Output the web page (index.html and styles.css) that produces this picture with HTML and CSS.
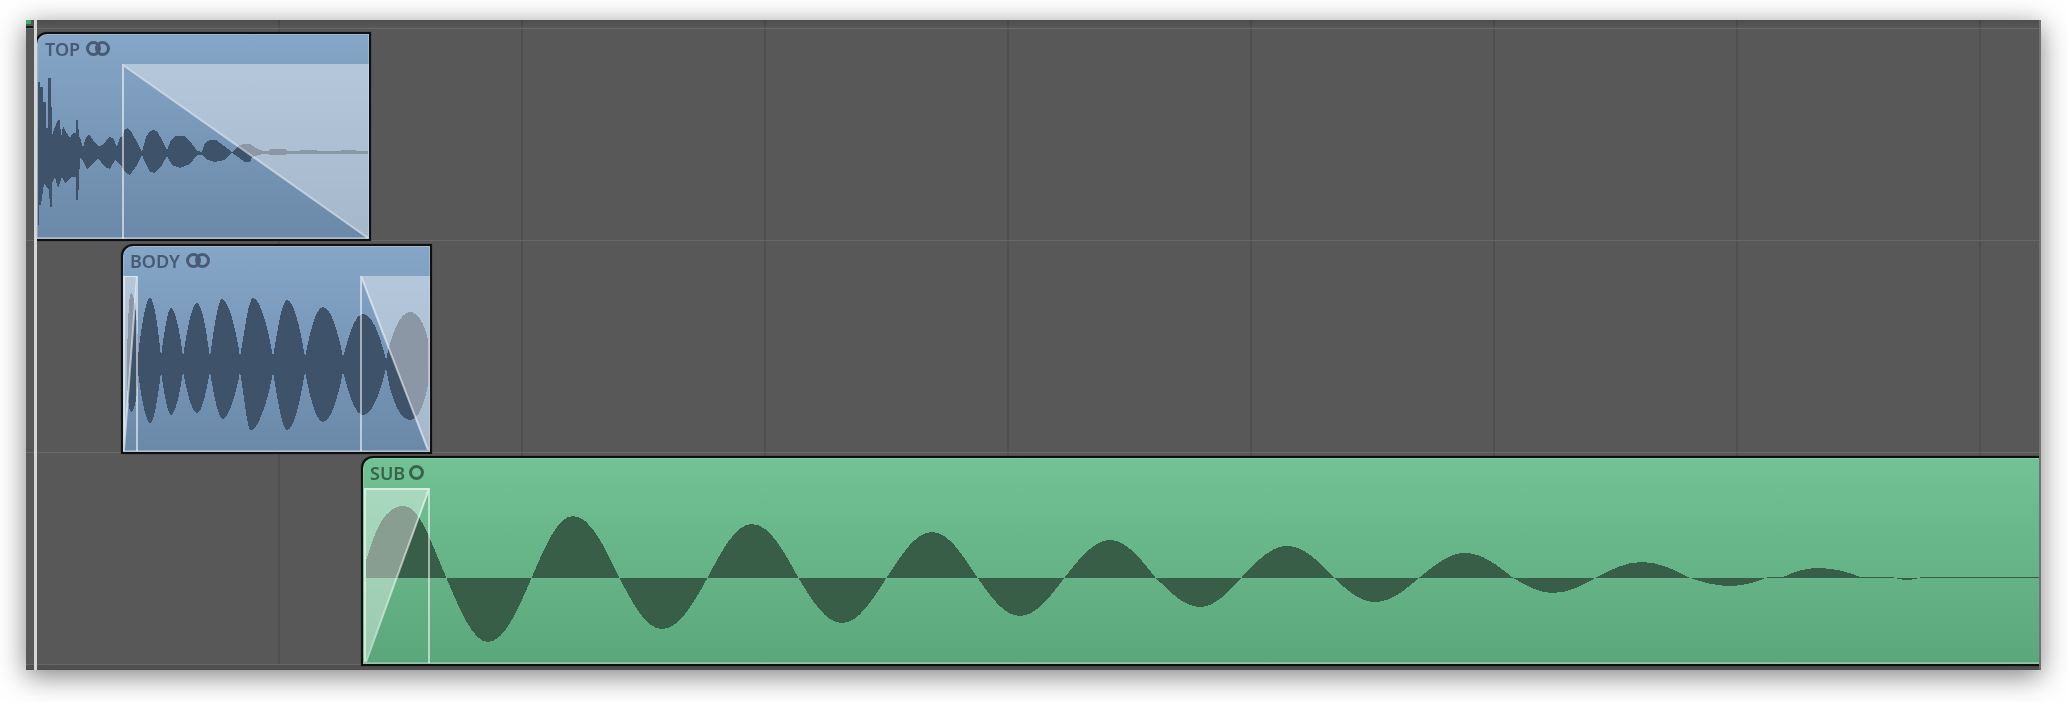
FILE: index.html
```html
<!DOCTYPE html>
<html lang="en">
<head>
<meta charset="utf-8">
<title>Arrangement</title>
<link rel="stylesheet" href="styles.css">
</head>
<body>
<main class="window">
  <div class="ruler"><span class="flag"></span><span class="tick"></span></div>
  <div class="playhead"></div>

  <section class="track">
    <article class="clip clip-blue clip-top">
      <header class="label">TOP
        <svg class="rings" viewBox="0 0 24 15"><circle cx="7.5" cy="7.5" r="6"/><circle cx="16.5" cy="7.5" r="6"/></svg>
      </header>
      <svg class="audio" viewBox="37 64 332 175" preserveAspectRatio="none">
        <path class="wave" d="M38 152 38 82 40 82 40 87 43 87 43 102 46 102 46 128 48 128 48 78 51 78 52 135 55 127 58 120 60 120 61 138 63 126 66 132 70 138 73 133 76 133 76 120 78 120 79 137 80 137 83 148 86 137 89 134 93 140 98 146 103 145 109 137 113 138 117 147 120 137 122 137 125 129 128 128 132 133 137 142 142 152 146 137 150 131 153 130 157 131 162 140 167 150 171 140 176 136 184 136 190 141 197 151 202 152 205 143 210 140 216 140 224 146 232 152 238 146 243 144 250 144 256 148 263 151 268 151 270 149 285 149 287 151 300 151 300 150 316 150 317 151 340 151 341 150 355 150 356 151 368 151 368 154 355 154 320 154 287 154 285 155 270 155 268 154 263 154 252 157 250 162 245 162 238 157 232 153 224 160 215 162 208 160 202 155 197 155 190 164 180 168 172 165 167 156 162 165 155 173 150 172 145 162 142 155 137 165 130 175 125 172 121 165 115 160 110 169 105 167 98 158 93 163 87 169 82 159 80 158 79 180 78 200 76 200 76 177 72 177 65 183 62 177 58 188 55 177 52 183 52 207 50 207 49 190 44 183 41 205 39 205 39 225 38 225Z"/>
        <path class="fade" d="M123 64H369V238Z"/>
        <path class="edge" d="M123 239V65L368 238"/>
      </svg>
    </article>
  </section>

  <section class="track">
    <article class="clip clip-blue clip-body">
      <header class="label">BODY
        <svg class="rings" viewBox="0 0 24 15"><circle cx="7.5" cy="7.5" r="6"/><circle cx="16.5" cy="7.5" r="6"/></svg>
      </header>
      <svg class="audio" viewBox="123 276 307 176" preserveAspectRatio="none">
        <path class="wave" d="M127 357C128 320 129 293 131 293C134 293 137 315 138 345V357C141 327 146 298 150 298C154 298 158 327 161 357C164 332 168 308 171 308C175 308 180 332 183 357C187 330 192 303 197 303C202 303 206 330 210 357C214 328 218 299 222 299C228 299 236 328 240 357C245 327 249 298 253 298C260 298 268 327 273 357C278 328 282 300 287 300C294 300 300 328 305 357C310 332 316 307 323 307C331 307 338 332 343 357C349 335 355 314 363 314C372 314 380 335 386 360C391 335 400 312 410 312C418 312 425 325 428 340V385C424 405 418 420 410 420C400 420 391 400 386 368C380 394 372 415 363 415C355 415 349 394 343 372C338 397 331 422 323 422C316 422 310 397 305 372C300 401 294 430 287 430C282 430 278 401 273 372C268 401 258 430 251 430C247 430 245 401 240 372C236 395 228 419 223 419C218 419 214 395 210 372C206 392 202 413 197 413C192 413 187 392 183 372C180 393 175 415 171 415C168 415 164 393 161 372C158 397 154 423 150 423C146 423 141 397 138 372V380C137 400 134 412 131 412C129 412 127 395 127 372Z"/>
        <path class="fade" d="M124 276H137L124 450Z"/>
        <path class="fade" d="M361 276H430V450H428Z"/>
        <path class="edge" d="M124 451V276H137V451M137 276L124 450"/>
        <path class="edge" d="M361 451V276L428 450"/>
      </svg>
    </article>
  </section>

  <section class="track">
    <article class="clip clip-green clip-sub">
      <header class="label">SUB
        <svg class="ring" viewBox="0 0 15 15"><circle cx="7.5" cy="7.5" r="6"/></svg>
      </header>
      <svg class="audio" viewBox="363 488 1678 176" preserveAspectRatio="none">
        <path class="wave" d="M366 577V561C375 530 385 506 403 506C420 506 430 540 446 577C460 610 473 642 488 642C504 642 518 610 532 577C545 546 558 516 573 516C590 516 604 546 619 577C633 604 646 629 662 629C679 629 693 604 708 577C722 550 736 524 752 524C769 524 783 550 798 577C812 601 826 623 842 623C858 623 872 601 887 577C902 554 916 532 932 532C948 532 962 554 977 577C991 597 1004 616 1020 616C1036 616 1050 597 1065 577C1080 558 1094 540 1110 540C1126 540 1140 558 1155 577C1170 592 1184 607 1200 607C1215 607 1228 592 1242 577C1257 561 1271 546 1287 546C1304 546 1318 561 1333 577C1347 590 1360 602 1375 602C1391 602 1405 590 1420 577C1435 565 1449 553 1465 553C1482 553 1497 565 1512 577C1525 585 1538 593 1553 593C1569 593 1583 585 1597 577C1612 569 1626 562 1642 562C1658 562 1673 569 1688 577C1702 582 1715 586 1730 586C1744 586 1757 582 1768 577H1783C1794 572 1805 568 1818 568C1833 568 1849 572 1860 577H1892C1903 581 1911 581 1922 577H2041V578H366Z"/>
        <path class="fade" d="M364 488H430L365 662H364Z"/>
        <path class="edge" d="M365 662V489H429V663M429 489L366 662"/>
      </svg>
    </article>
  </section>
  <div class="track-end"></div>
</main>
</body>
</html>
```

FILE: styles.css
```css
html, body {
  margin: 0;
  padding: 0;
  background: #fff;
}

body {
  width: 2068px;
  height: 702px;
  overflow: hidden;
  padding: 20px 0 0 26px;
  box-sizing: border-box;
}

.window {
  position: relative;
  width: 2015px;
  height: 650px;
  box-sizing: border-box;
  overflow: hidden;
  background-color: #585858;
  background-image: linear-gradient(90deg, #4f4f4f 2px, transparent 2px);
  background-size: 243px 100%;
  background-position: 9px 0;
  border-right: 2px solid #727272;
  box-shadow: 0 6px 26px rgba(0, 0, 0, 0.5);
  filter: blur(0.5px);
  font-family: "Noto Sans", "Open Sans", sans-serif;
}

.ruler {
  height: 8px;
  background: linear-gradient(rgba(0, 0, 0, 0.12), rgba(0, 0, 0, 0));
}

.flag {
  display: block;
  width: 5px;
  height: 4px;
  background: #35b06a;
}

.tick {
  display: block;
  width: 7px;
  height: 2px;
  margin-top: 2px;
  background: #141414;
}

.playhead {
  position: absolute;
  z-index: 5;
  left: 8px;
  top: 0;
  bottom: 0;
  width: 3px;
  background: #d6d6d6;
}

.track {
  height: 212px;
  box-sizing: border-box;
  padding-top: 3px;
  border-top: 1px solid #686868;
}

.track-end {
  height: 6px;
  border-top: 1px solid #686868;
  background: #4f4f4f;
}

.clip {
  display: flex;
  flex-direction: column;
  position: relative;
  z-index: 1;
  box-sizing: border-box;
  height: 210px;
  border: 2px solid #0f0f0f;
  border-top-left-radius: 12px;
}

.clip-blue {
  background: linear-gradient(#86a6c7, #6a89a9);
  box-shadow: inset 0 0 0 1px rgba(255, 255, 255, 0.22), inset 0 -2px 0 rgba(255, 255, 255, 0.3), 0 0 1px #111;
  color: #485a74;
}

.clip-green {
  background: linear-gradient(#72c295, #5aa77b);
  box-shadow: inset 0 0 0 1px rgba(255, 255, 255, 0.15), inset 0 -2px 0 rgba(255, 255, 255, 0.25), 0 0 1px #111;
  color: #3a634c;
}

.clip-top {
  width: 336px;
  height: 209px;
  margin-left: 9px;
}

.clip-body {
  width: 311px;
  margin-left: 95px;
}

.clip-sub {
  width: 1680px;
  margin-left: 335px;
  border-right: 0;
}

.label {
  display: flex;
  align-items: center;
  gap: 6px;
  flex: none;
  height: 30px;
  padding: 0 0 1px 7px;
  box-sizing: border-box;
  font-size: 18px;
  font-weight: 600;
  line-height: 1;
}

.clip-top .label {
  padding-left: 8px;
}

.clip-green .label {
  gap: 4px;
}

.rings {
  width: 24px;
  height: 15px;
}

.ring {
  width: 15px;
  height: 15px;
}

.rings circle,
.ring circle {
  fill: none;
  stroke: currentColor;
  stroke-width: 3;
}

.audio {
  display: block;
  flex: 1;
  min-height: 0;
  width: 100%;
}

.wave {
  shape-rendering: crispEdges;
}

.clip-blue .wave {
  fill: #3e5269;
}

.clip-green .wave {
  fill: #385e48;
}

.fade {
  fill: rgba(255, 255, 255, 0.4);
}

.edge {
  fill: none;
  stroke: rgba(255, 255, 255, 0.55);
  stroke-width: 2;
}
```
